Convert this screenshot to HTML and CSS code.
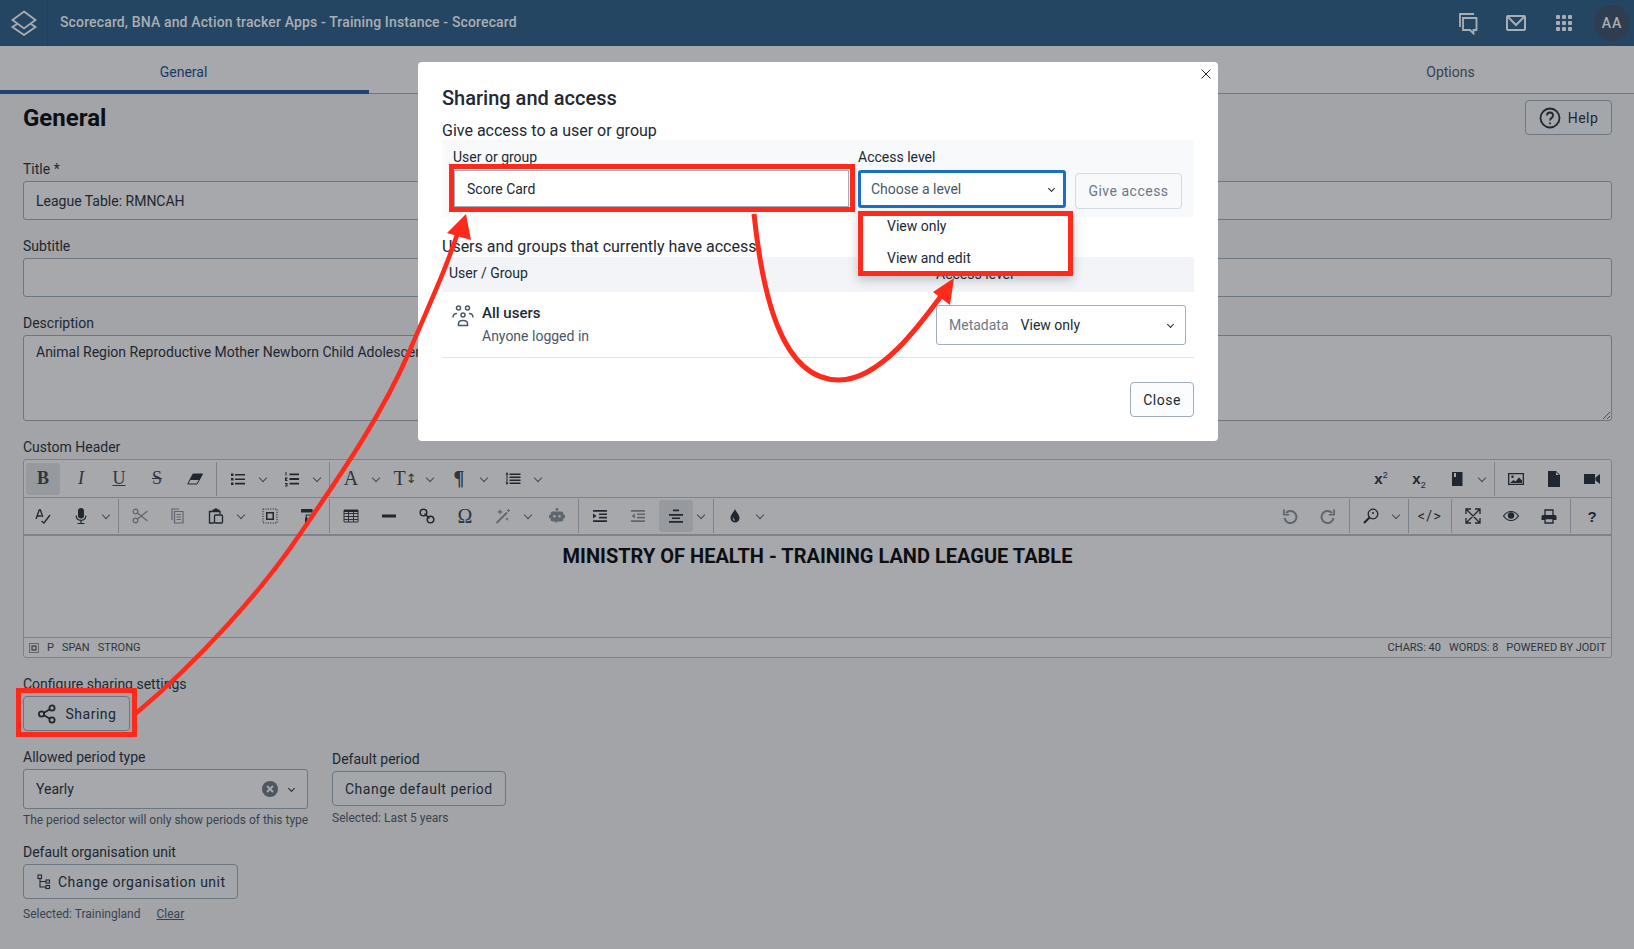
FILE: index.html
```html
<!DOCTYPE html>
<html lang="en">
<head>
    <meta charset="UTF-8">
    <title>Scorecard - General</title>
    <link rel="stylesheet" href="styles.css">
</head>
<body>

    <!-- icon set for the editor toolbar -->
    <svg class="defs" width="0" height="0">
        <symbol id="i-eraser" viewBox="0 0 16 16"><path d="M6 3h9.500L10 13H.8z" fill="none" stroke="currentColor"/><path d="M6 3h9.500l-3 6H2.800z"/></symbol>
        <symbol id="i-ul" viewBox="0 0 16 16"><path d="M1 2.500h2.500V5H1zM1 7h2.500v2.500H1zM1 11.500h2.500V14H1zM5 3h10v1.600H5zM5 7.400h10V9H5zM5 11.800h10v1.600H5z"/></symbol>
        <symbol id="i-ol" viewBox="0 0 16 16"><path d="M1.500 1h1v3.500h-1zM1 6.500h2.500v1L2 9h1.500v1H1zM1 12h2.500v3.500H1v-1h1.500v-.4H1.500v-.7h1V13H1zM5.500 2.500H15v1.800H5.500zM5.500 7.100H15v1.800H5.500zM5.500 11.700H15v1.800H5.500z"/></symbol>
        <symbol id="i-spacing" viewBox="0 0 16 16"><path d="M4.500 2.500h11v1.400h-11zM4.500 5.500h11v1.400h-11zM4.500 8.500h11v1.400h-11zM4.500 11.500h11v1.400h-11zM.5 3.500L2 1l1.500 2.500h-1v8h1L2 14 .5 11.500h1v-8z"/></symbol>
        <symbol id="i-spell" viewBox="0 0 16 16"><path d="M1 11L4.200 2h1.200l2.400 7M2.200 8h4.200M6.500 13l2.500 2 6-8" fill="none" stroke="currentColor" stroke-width="1.300"/></symbol>
        <symbol id="i-mic" viewBox="0 0 16 16"><rect x="5" y="0" width="6" height="10.500" rx="3"/><path d="M3.200 7.500c0 3 2 4.800 4.800 4.800s4.800-1.800 4.800-4.800M8 12v3M4.500 15.500h7" fill="none" stroke="currentColor" stroke-width="1.200"/></symbol>
        <symbol id="i-cut" viewBox="0 0 16 16"><g fill="none" stroke="currentColor" stroke-width="1.300"><circle cx="3.500" cy="3.500" r="2.300"/><circle cx="3.500" cy="12.500" r="2.300"/><path d="M5.500 5l10 8M5.500 11l10-8"/></g></symbol>
        <symbol id="i-copy" viewBox="0 0 16 16"><g fill="none" stroke="currentColor" stroke-width="1.200"><path d="M2 12V1h7"/><path d="M4.500 3.500h8.500V15H4.500zM6.500 6.500h4.500M6.500 9h4.500M6.500 11.500h4.500"/></g></symbol>
        <symbol id="i-paste" viewBox="0 0 16 16"><path d="M5.500 1.500L8 0l2 1.500h1.500v2h-7v-2z"/><g fill="none" stroke="currentColor" stroke-width="1.300"><path d="M6 15H1.500V3.500H12V6"/><rect x="6.500" y="7" width="8" height="8" rx="1"/></g></symbol>
        <symbol id="i-select" viewBox="0 0 16 16"><path d="M1 1h14v14H1z" fill="none" stroke="currentColor" stroke-width=".9" stroke-dasharray="1.200 1.200"/><path d="M4 4h8v8H4zM5.500 5.500v5h5v-5z" fill-rule="evenodd"/></symbol>
        <symbol id="i-paint" viewBox="0 0 16 16"><path d="M1 1h11.500v3.500H1zM5 9.500h2.500V16H5z"/><path d="M12.500 3H15v4H6.200v3" fill="none" stroke="currentColor" stroke-width="1.100"/></symbol>
        <symbol id="i-table" viewBox="0 0 16 16"><g fill="none" stroke="currentColor" stroke-width=".9"><path d="M1 2h14v12H1zM1 5.500h14M1 8.500h14M1 11.500h14M5.500 2v12M10.500 2v12"/></g><path d="M1 2h14v2H1z"/></symbol>
        <symbol id="i-hr" viewBox="0 0 16 16"><path d="M1 6.500h14v3H1z"/></symbol>
        <symbol id="i-link" viewBox="0 0 16 16"><g fill="none" stroke="currentColor" stroke-width="1.500"><circle cx="4.500" cy="4.500" r="3.300"/><circle cx="11.500" cy="11.500" r="3.300"/><path d="M5.500 5.500l5 5"/></g></symbol>
        <symbol id="i-wand" viewBox="0 0 16 16"><path d="M1.500 15L12 4.500" stroke="currentColor" stroke-width="1.800"/><path d="M5 1l.8 2L8 4l-2.200.8L5 7l-.8-2.200L2 4l2.200-1zM12 9l.6 1.500L14 11l-1.400.6L12 13l-.6-1.400L10 11l1.400-.5zM13 1h1v1h1v1h-1v1h-1V3h-1V2h1z"/></symbol>
        <symbol id="i-robot" viewBox="0 0 16 16"><path d="M7.300 0h1.400v2.500H7.300z"/><circle cx="8" cy="1.300" r="1.300"/><path d="M4 3.500h8a2.500 2.500 0 0 1 2.500 2.500v1H16v3h-1.500v1a2.500 2.500 0 0 1-2.500 2.500H9L6.500 15v-1.500H4A2.500 2.500 0 0 1 1.500 11v-1H0V7h1.500V6A2.500 2.500 0 0 1 4 3.500zM5.500 7a1.300 1.300 0 1 0 0 2.600 1.300 1.300 0 0 0 0-2.600zm5 0a1.300 1.300 0 1 0 0 2.600 1.300 1.300 0 0 0 0-2.600z" fill-rule="evenodd"/></symbol>
        <symbol id="i-indent" viewBox="0 0 16 16"><path d="M1 2h14v1.800H1zM7 5.500h8v1.600H7zM7 8.800h8v1.600H7zM1 12.200h14V14H1zM1 5.500L4.500 8 1 10.500z"/></symbol>
        <symbol id="i-outdent" viewBox="0 0 16 16"><path d="M1 2h14v1.800H1zM7 5.500h8v1.600H7zM7 8.800h8v1.600H7zM1 12.200h14V14H1zM5 5.500L1.500 8 5 10.500z"/></symbol>
        <symbol id="i-center" viewBox="0 0 16 16"><path d="M5 1.500h6v1.800H5zM1 6h14v1.800H1zM4 9.500h8v1.600H4zM1 13h14v1.800H1z"/></symbol>
        <symbol id="i-drop" viewBox="0 0 16 16"><path d="M8 1c1 3 4.500 5.500 4.500 9a4.500 4.500 0 0 1-9 0C3.500 6.500 7 4 8 1zM6 9.500a2 2 0 0 0 2 3v-1a1 1 0 0 1-1-2z" fill-rule="evenodd"/></symbol>
        <symbol id="i-undo" viewBox="0 0 16 16"><path d="M4 5a6 6 0 1 1-1.500 5" fill="none" stroke="currentColor" stroke-width="2"/><path d="M1 1.500h1.800v4.500h4.500L7 7.500H1z"/></symbol>
        <symbol id="i-redo" viewBox="0 0 16 16"><path d="M12 5a6 6 0 1 0 1.500 5" fill="none" stroke="currentColor" stroke-width="2"/><path d="M15 1.500h-1.800v4.500H8.700L9 7.500h6z"/></symbol>
        <symbol id="i-search" viewBox="0 0 16 16"><circle cx="10" cy="6" r="4.800" fill="none" stroke="currentColor" stroke-width="1.300"/><path d="M6.500 9.500L1 15" stroke="currentColor" stroke-width="2.200"/><circle cx="10" cy="5" r="1"/></symbol>
        <symbol id="i-expand" viewBox="0 0 16 16"><path d="M1 6V1h5M1 1l14 14M10 15h5v-5M10 1h5v5M15 1L1 15M1 10v5h5" fill="none" stroke="currentColor" stroke-width="1.300"/></symbol>
        <symbol id="i-eye" viewBox="0 0 16 16"><path d="M.5 8c2-3 4.500-4.500 7.500-4.500s5.500 1.500 7.500 4.500c-2 3-4.500 4.500-7.500 4.500S2.500 11 .5 8z" fill="none" stroke="currentColor" stroke-width="1.200"/><circle cx="8" cy="7.500" r="3.200"/></symbol>
        <symbol id="i-print" viewBox="0 0 16 16"><path d="M4 7V2h8v5" fill="none" stroke="currentColor" stroke-width="1.300"/><path d="M2 7h12a1.500 1.500 0 0 1 1.500 1.500V12H12v-1.500H4V12H.5V8.500A1.500 1.500 0 0 1 2 7z"/><path d="M4 10.500h8V15H4z" fill="none" stroke="currentColor" stroke-width="1.300"/></symbol>
        <symbol id="i-book" viewBox="0 0 16 16"><path d="M3 1h10.500v14H3zM5 2v4h2V2z" fill-rule="evenodd"/></symbol>
        <symbol id="i-image" viewBox="0 0 16 16"><path d="M0 2h16v12H0zM1.300 3.300v9.400h13.400V3.300z" fill-rule="evenodd"/><circle cx="4.500" cy="5.800" r="1.300"/><path d="M2 12l3.500-3 2 1.500L11 6.500l3 3V12z"/></symbol>
        <symbol id="i-file" viewBox="0 0 16 16"><path d="M2 0h8l4 4v12H2zM10 1v3h3z" fill-rule="evenodd"/></symbol>
        <symbol id="i-video" viewBox="0 0 16 16"><path d="M0 3h11v10H0zM11.500 6.500L16 3v10l-4.500-3.500z"/></symbol>
    </svg>

    <header class="topbar">
        <div class="logo">
            <svg width="28" height="26" viewBox="0 0 28 26" fill="none" stroke="#a9aeb4" stroke-width="1.800">
                <path d="M14 1.500L25.500 10 14 18.500 2.500 10z"/>
                <path d="M7 14L2.500 17 14 25 25.500 17 21 14"/>
            </svg>
        </div>
        <div class="app-title">Scorecard, BNA and Action tracker Apps - Training Instance - Scorecard</div>
        <div class="top-icons">
            <svg width="24" height="24" viewBox="0 0 24 24" fill="none" stroke="#a9aeb4" stroke-width="1.800">
                <path d="M5 16V3h14"/>
                <path d="M8 7h13.500v12h-3v3.500L15 19H8z"/>
            </svg>
            <svg width="22" height="22" viewBox="0 0 22 22" fill="none" stroke="#a9aeb4" stroke-width="2">
                <rect x="2" y="4" width="18" height="14" rx="1"/>
                <path d="M3 5l8 8 8-8"/>
            </svg>
            <svg width="18" height="18" viewBox="0 0 18 18" fill="#a9aeb4">
                <rect x="1" y="1" width="4" height="4" rx="1"/><rect x="7" y="1" width="4" height="4" rx="1"/><rect x="13" y="1" width="4" height="4" rx="1"/>
                <rect x="1" y="7" width="4" height="4" rx="1"/><rect x="7" y="7" width="4" height="4" rx="1"/><rect x="13" y="7" width="4" height="4" rx="1"/>
                <rect x="1" y="13" width="4" height="4" rx="1"/><rect x="7" y="13" width="4" height="4" rx="1"/><rect x="13" y="13" width="4" height="4" rx="1"/>
            </svg>
            <div class="avatar">AA</div>
        </div>
    </header>

    <nav class="tabs">
        <div class="tab active">General</div>
        <div class="tab">Options</div>
    </nav>

    <main class="page">
        <div class="title-row">
            <h1>General</h1>
            <button class="btn help-btn" type="button">
                <svg width="22" height="22" viewBox="0 0 22 22" fill="none" stroke="#212934" stroke-width="1.800">
                    <circle cx="11" cy="11" r="9.500"/>
                    <path d="M8 8.500c0-4 6-4 6 0 0 2.500-3 2.500-3 5"/>
                    <path d="M11 15.500v1.800"/>
                </svg>
                Help
            </button>
        </div>

        <div class="field">
            <label>Title *</label>
            <input class="text-input" type="text" value="League Table: RMNCAH">
        </div>
        <div class="field">
            <label>Subtitle</label>
            <input class="text-input" type="text">
        </div>
        <div class="field">
            <label>Description</label>
            <textarea class="text-area">Animal Region Reproductive Mother Newborn Child Adolescent Health</textarea>
        </div>

        <div class="field">
            <label>Custom Header</label>
            <div class="editor">
                <div class="tool-row">
                    <span class="tool serif active-tool"><b>B</b></span>
                    <span class="tool serif"><i>I</i></span>
                    <span class="tool serif"><u>U</u></span>
                    <span class="tool serif"><s>S</s></span>
                    <span class="tool"><svg><use href="#i-eraser"/></svg></span>
                    <span class="sep"></span>
                    <span class="tool"><svg><use href="#i-ul"/></svg></span><span class="chev"></span>
                    <span class="tool"><svg><use href="#i-ol"/></svg></span><span class="chev"></span>
                    <span class="sep"></span>
                    <span class="tool serif big">A</span><span class="chev"></span>
                    <span class="tool serif big">T<small>↕</small></span><span class="chev"></span>
                    <span class="tool serif big"><b>¶</b></span><span class="chev"></span>
                    <span class="tool"><svg><use href="#i-spacing"/></svg></span><span class="chev"></span>
                    <span class="spacer"></span>
                    <span class="tool script"><b>x<sup>2</sup></b></span>
                    <span class="tool script"><b>x<sub>2</sub></b></span>
                    <span class="tool"><svg><use href="#i-book"/></svg></span><span class="chev"></span>
                    <span class="sep"></span>
                    <span class="tool"><svg><use href="#i-image"/></svg></span>
                    <span class="tool"><svg><use href="#i-file"/></svg></span>
                    <span class="tool"><svg><use href="#i-video"/></svg></span>
                </div>
                <div class="tool-row">
                    <span class="tool"><svg><use href="#i-spell"/></svg></span>
                    <span class="tool"><svg><use href="#i-mic"/></svg></span><span class="chev"></span>
                    <span class="sep"></span>
                    <span class="tool off"><svg><use href="#i-cut"/></svg></span>
                    <span class="tool off"><svg><use href="#i-copy"/></svg></span>
                    <span class="tool"><svg><use href="#i-paste"/></svg></span><span class="chev"></span>
                    <span class="tool"><svg><use href="#i-select"/></svg></span>
                    <span class="tool"><svg><use href="#i-paint"/></svg></span>
                    <span class="sep"></span>
                    <span class="tool"><svg><use href="#i-table"/></svg></span>
                    <span class="tool"><svg><use href="#i-hr"/></svg></span>
                    <span class="tool"><svg><use href="#i-link"/></svg></span>
                    <span class="tool serif big">Ω</span>
                    <span class="tool off"><svg><use href="#i-wand"/></svg></span><span class="chev"></span>
                    <span class="tool off"><svg><use href="#i-robot"/></svg></span>
                    <span class="sep"></span>
                    <span class="tool"><svg><use href="#i-indent"/></svg></span>
                    <span class="tool off"><svg><use href="#i-outdent"/></svg></span>
                    <span class="tool active-tool"><svg><use href="#i-center"/></svg></span><span class="chev"></span>
                    <span class="sep"></span>
                    <span class="tool"><svg><use href="#i-drop"/></svg></span><span class="chev"></span>
                    <span class="spacer"></span>
                    <span class="tool off"><svg><use href="#i-undo"/></svg></span>
                    <span class="tool off"><svg><use href="#i-redo"/></svg></span>
                    <span class="sep"></span>
                    <span class="tool"><svg><use href="#i-search"/></svg></span><span class="chev"></span>
                    <span class="sep"></span>
                    <span class="tool code">&lt;/&gt;</span>
                    <span class="sep"></span>
                    <span class="tool"><svg><use href="#i-expand"/></svg></span>
                    <span class="tool"><svg><use href="#i-eye"/></svg></span>
                    <span class="tool"><svg><use href="#i-print"/></svg></span>
                    <span class="sep"></span>
                    <span class="tool script"><b>?</b></span>
                </div>
                <div class="editor-body">MINISTRY OF HEALTH - TRAINING LAND LEAGUE TABLE</div>
                <div class="statusbar">
                    <span class="crumbs">
                        <svg width="10" height="10" viewBox="0 0 10 10" fill="none" stroke="#212934" stroke-dasharray="1 1"><rect x=".5" y=".5" width="9" height="9"/><rect x="3" y="3" width="4" height="4" stroke-dasharray="none"/></svg>
                        <span>P</span><span>SPAN</span><span>STRONG</span>
                    </span>
                    <span class="counts"><span>CHARS: 40</span><span>WORDS: 8</span><span>POWERED BY JODIT</span></span>
                </div>
            </div>
        </div>

        <div class="field sharing-field">
            <label>Configure sharing settings</label>
            <button class="btn sharing-btn" type="button">
                <svg width="20" height="20" viewBox="0 0 20 20" fill="none" stroke="#212934" stroke-width="1.800">
                    <circle cx="15" cy="4" r="2.600"/><circle cx="4.500" cy="10" r="2.600"/><circle cx="15" cy="16" r="2.600"/>
                    <path d="M7 8.700l5.500-3.300M7 11.300l5.500 3.300"/>
                </svg>
                Sharing
            </button>
        </div>

        <div class="period-row">
            <div class="period-type">
                <label>Allowed period type</label>
                <div class="select-box">
                    <span>Yearly</span>
                    <svg class="clear-x" width="16" height="16" viewBox="0 0 16 16"><circle cx="8" cy="8" r="8" fill="#6c7787"/><path d="M5 5l6 6M11 5l-6 6" stroke="#fff" stroke-width="1.800"/></svg>
                    <span class="chev dark"></span>
                </div>
                <p class="hint">The period selector will only show periods of this type</p>
            </div>
            <div class="default-period">
                <label>Default period</label>
                <button class="btn" type="button">Change default period</button>
                <p class="hint">Selected: Last 5 years</p>
            </div>
        </div>

        <div class="field org-field">
            <label>Default organisation unit</label>
            <button class="btn org-btn" type="button">
                <svg width="14" height="16" viewBox="0 0 14 16" fill="none" stroke="#212934" stroke-width="1.100">
                    <rect x="1" y="1" width="3.500" height="3.500"/><rect x="9" y="6" width="3.500" height="3"/><rect x="9" y="11.500" width="3.500" height="3"/>
                    <path d="M3 4.500V13h6M3 7.500h6"/>
                </svg>
                Change organisation unit
            </button>
            <p class="hint org-hint"><span>Selected: Trainingland</span><u>Clear</u></p>
        </div>

        <div class="field cut-field">
            <label>Additional labels</label>
        </div>
    </main>

    <div class="backdrop"></div>

    <section class="modal">
        <svg class="modal-close" width="10" height="10" viewBox="0 0 10 10" stroke="#212934" stroke-width="1"><path d="M.5.500l9 9M9.500.500l-9 9"/></svg>
        <h2>Sharing and access</h2>
        <h3>Give access to a user or group</h3>
        <div class="access-form">
            <div class="who-col">
                <label>User or group</label>
                <input class="who-input" type="text" value="Score Card">
            </div>
            <div class="level-col">
                <label>Access level</label>
                <div class="level-select">
                    <span>Choose a level</span>
                    <span class="chev dark"></span>
                </div>
                <div class="level-menu">
                    <div>View only</div>
                    <div>View and edit</div>
                </div>
            </div>
            <button class="btn give-btn" type="button">Give access</button>
        </div>

        <h3 class="current-title">Users and groups that currently have access</h3>
        <div class="table-head">
            <span>User / Group</span>
            <span class="level-head">Access level</span>
        </div>
        <div class="table-row">
            <svg class="users-icon" width="22" height="22" viewBox="0 0 22 22" fill="none" stroke="#4a5768" stroke-width="1.500">
                <circle cx="6.500" cy="3" r="2"/><circle cx="15.500" cy="3" r="2"/><circle cx="11" cy="10" r="2"/>
                <path d="M1 12.500c0-2.500 1.500-4 4-4M21 12.500c0-2.500-1.500-4-4-4"/>
                <path d="M6.500 20.500v-2c0-2 2-3 4.500-3s4.500 1 4.500 3v2z"/>
            </svg>
            <div class="who">
                <strong>All users</strong>
                <span>Anyone logged in</span>
            </div>
            <div class="row-select">
                <span class="muted">Metadata</span>
                <span>View only</span>
                <span class="chev dark"></span>
            </div>
        </div>
        <div class="modal-actions">
            <button class="btn close-btn" type="button">Close</button>
        </div>
    </section>

    <!-- red annotation boxes and arrows -->
    <svg class="arrows" width="1634" height="949" viewBox="0 0 1634 949">
        <rect x="18.500" y="690.500" width="116" height="44" fill="none" stroke="#ff2a1c" stroke-width="5"/>
        <rect x="451.500" y="166.500" width="401" height="43" fill="none" stroke="#ff2a1c" stroke-width="5"/>
        <path d="M134 715C200 660 262 590 298 537S380 420 410 350S447 265 458 232" fill="none" stroke="#ff2a1c" stroke-width="4.500"/>
        <path d="M466 214L447 233L471 240Z" fill="#ff2a1c"/>
        <path d="M754 214C762 290 780 380 839 380C880 380 920 325 944 292" fill="none" stroke="#ff2a1c" stroke-width="5"/>
        <path d="M954 278L933 292L950 305Z" fill="#ff2a1c"/>
    </svg>

</body>
</html>
```

FILE: styles.css
```css
html, body {
    margin: 0;
    height: 949px;
    overflow: hidden;
}

body {
    position: relative;
    background: #f8f9fa;
    color: #212934;
    font-family: Roboto, "Noto Sans", sans-serif;
    font-size: 14px;
}

.defs {
    position: absolute;
}

/* top bar */
.topbar {
    position: relative;
    z-index: 2;
    display: flex;
    align-items: center;
    height: 46px;
    background: #254662;
    color: #a9aeb4;
}

.logo {
    display: flex;
    align-items: center;
    justify-content: center;
    width: 47px;
    height: 46px;
    border-right: 1px solid #22405a;
}

.app-title {
    margin-left: 12px;
    padding-bottom: 2px;
    font-size: 14px;
    font-weight: 500;
    letter-spacing: .14px;
}

.top-icons {
    display: flex;
    align-items: center;
    margin-left: auto;
    margin-right: 4px;
}

.top-icons svg:nth-child(1) { margin-right: 26px; }
.top-icons svg:nth-child(2) { margin-right: 28px; }
.top-icons svg:nth-child(3) { margin-right: 21px; }

.avatar {
    display: flex;
    align-items: center;
    justify-content: center;
    width: 36px;
    height: 36px;
    border-radius: 50%;
    background: #2e3d50;
    font-size: 14px;
    font-weight: 500;
    letter-spacing: 1px;
}

/* tabs */
.tabs {
    display: flex;
    justify-content: space-between;
    height: 48px;
    box-sizing: border-box;
    border-bottom: 1px solid #a0adba;
    background: #fff;
}

.tab {
    width: 369px;
    height: 48px;
    box-sizing: border-box;
    padding-top: 18px;
    padding-left: 2px;
    text-align: center;
    color: #4a5768;
}

.tab.active {
    padding-left: 0;
    padding-right: 2px;
    border-bottom: 4px solid #1e56a8;
    color: #14478f;
}

/* page form */
.page {
    padding: 0 22px 0 23px;
}

.title-row {
    display: flex;
    justify-content: space-between;
    align-items: center;
    height: 35px;
    padding-top: 6px;
    margin-bottom: 26px;
}

h1 {
    margin: 1px 0 0;
    font-size: 24px;
    font-weight: 700;
    color: #000;
}

label {
    display: block;
    line-height: 16px;
    margin-bottom: 4px;
}

.field {
    margin-bottom: 18px;
}

.text-input, .text-area {
    display: block;
    width: 100%;
    box-sizing: border-box;
    padding: 0 12px;
    border: 1px solid #a0adba;
    border-radius: 3px;
    background: #fff;
    color: #212934;
    font-family: Roboto, sans-serif;
    font-size: 14px;
}

.text-input {
    height: 39px;
}

.text-area {
    height: 86px;
    padding-top: 8px;
}

.btn {
    display: inline-flex;
    align-items: center;
    justify-content: center;
    box-sizing: border-box;
    height: 35px;
    padding: 0 12px;
    border: 1px solid #a0adba;
    border-radius: 4px;
    background: #fbfcfd;
    color: #212934;
    font-family: Roboto, sans-serif;
    font-size: 14px;
    letter-spacing: .5px;
}

.help-btn {
    gap: 7px;
    width: 87px;
    padding: 0;
}

/* editor */
.editor {
    height: 199px;
    box-sizing: border-box;
    display: flex;
    flex-direction: column;
    border: 1px solid #b9c2cc;
    border-radius: 3px;
    background: #fff;
}

.tool-row {
    display: flex;
    align-items: center;
    height: 38px;
    box-sizing: border-box;
    border-bottom: 1px solid #b9c2cc;
    color: #212934;
}

.tool-row + .tool-row {
    height: 38px;
    border-bottom-width: 2px;
}

.tool {
    display: flex;
    align-items: center;
    justify-content: center;
    flex: none;
    width: 34px;
    height: 32px;
    margin: 0 2px;
    border-radius: 3px;
    font-size: 18px;
}

.tool svg {
    width: 16px;
    height: 16px;
    fill: currentColor;
}

.tool.off {
    color: #8a929c;
}

.active-tool {
    background: #e4e6e9;
}

.serif {
    font-family: "Liberation Serif", serif;
    color: #3a414b;
}

.serif.big {
    font-size: 20px;
}

.serif small {
    font-size: 13px;
    font-family: "DejaVu Sans", sans-serif;
}

.script {
    font-family: "Liberation Sans", sans-serif;
    font-size: 15px;
    line-height: 1;
}

.script sup, .script sub {
    font-size: 9px;
    line-height: 0;
    font-weight: 400;
}

.code {
    font-size: 14px;
    letter-spacing: 1.500px;
}

.chev {
    position: relative;
    flex: none;
    display: block;
    width: 16px;
    height: 32px;
}

.chev::after {
    content: "";
    position: absolute;
    left: 3px;
    top: 12px;
    width: 5px;
    height: 5px;
    border-right: 1.200px solid #5a626d;
    border-bottom: 1.200px solid #5a626d;
    transform: rotate(45deg);
}

.chev.dark::after {
    top: 13px;
    width: 4px;
    height: 4px;
    border-color: #212934;
}

.sep {
    flex: none;
    width: 1px;
    height: 34px;
    margin: 0 2px;
    background: #b9c2cc;
}

.spacer {
    flex: 1;
}

.editor-body {
    flex: 1;
    padding-top: 7px;
    text-align: center;
    font-size: 20px;
    font-weight: 700;
    line-height: 26px;
    color: #000;
}

.statusbar {
    display: flex;
    justify-content: space-between;
    align-items: center;
    height: 19px;
    padding: 0 5px;
    border-top: 1px solid #b9c2cc;
    font-size: 11px;
    color: #3a414b;
}

.crumbs, .counts {
    display: flex;
    align-items: center;
    gap: 8px;
}

/* lower form */
.sharing-field {
    margin-bottom: 18px;
}

.sharing-btn {
    gap: 9px;
    width: 107px;
    padding: 0;
}

.period-row {
    display: flex;
    gap: 24px;
    align-items: flex-start;
}

.period-type {
    width: 285px;
}

.default-period {
    padding-top: 2px;
}

.default-period .hint {
    margin-top: 5px;
}

.select-box {
    display: flex;
    align-items: center;
    height: 40px;
    box-sizing: border-box;
    padding: 0 9px 0 12px;
    border: 1px solid #a0adba;
    border-radius: 3px;
    background: #fff;
}

.select-box span:first-child {
    flex: 1;
}

.clear-x {
    margin-right: 8px;
}

.select-box .chev {
    width: 12px;
}

.hint {
    margin: 4px 0 0;
    font-size: 12px;
    line-height: 15px;
    color: #4a5768;
    white-space: nowrap;
}

.org-field {
    margin-top: 16px;
    margin-bottom: 0;
}

.org-btn {
    gap: 7px;
    padding: 0 11px 0 13px;
}

.org-hint {
    display: flex;
    gap: 16px;
    margin-top: 8px;
}

.cut-field {
    margin-top: 26px;
}

/* dark layer behind the modal */
.backdrop {
    position: absolute;
    left: 0;
    right: 0;
    top: 46px;
    bottom: 0;
    background: rgba(33, 37, 44, .4);
}

/* sharing modal */
.modal {
    position: absolute;
    left: 418px;
    top: 62px;
    width: 800px;
    height: 379px;
    box-sizing: border-box;
    padding: 24px;
    border-radius: 4px;
    background: #fff;
}

.modal-close {
    position: absolute;
    right: 7px;
    top: 7px;
}

.modal h2 {
    margin: 0 0 13px;
    font-size: 20px;
    font-weight: 500;
    line-height: 24px;
}

.modal h3 {
    margin: 0 0 1px;
    font-size: 16px;
    font-weight: 400;
    line-height: 16px;
}

.access-form {
    display: flex;
    gap: 9px;
    height: 77px;
    box-sizing: border-box;
    padding: 9px 12px 9px;
    border-radius: 4px;
    background: #f8f9fa;
}

.access-form label {
    margin-bottom: 5px;
    margin-left: -1px;
}

.who-col {
    width: 395px;
}

.who-input {
    display: block;
    width: 100%;
    height: 37px;
    box-sizing: border-box;
    padding: 0 12px;
    border: 1px solid #a0adba;
    border-radius: 0;
    color: #212934;
    font-family: Roboto, sans-serif;
    font-size: 14px;
}

.level-col {
    position: relative;
    width: 208px;
}

.access-form .level-col label {
    margin-left: 0;
}

.level-select {
    display: flex;
    justify-content: space-between;
    align-items: center;
    height: 38px;
    box-sizing: border-box;
    padding: 0 1px 0 10px;
    border: 3px solid #1a6ecb;
    border-radius: 3px;
    background: #fff;
    color: #4a5768;
}

.level-menu {
    position: absolute;
    left: 0;
    top: 62px;
    width: 215px;
    height: 65px;
    box-sizing: border-box;
    padding-left: 24px;
    border: 5px solid #ff2a1c;
    background: #fff;
    box-shadow: 0 4px 10px rgba(33, 41, 52, .25);
    line-height: 32px;
}

.level-menu div:first-child {
    margin-top: -6px;
}

.give-btn {
    align-self: flex-end;
    width: 107px;
    height: 36px;
    margin-bottom: -1px;
    padding: 0;
    border-color: #d5dae0;
    background: #f8f9fa;
    color: #6c7787;
}

.current-title {
    margin-top: 22px !important;
    margin-bottom: 2px !important;
}

.table-head {
    display: flex;
    justify-content: space-between;
    height: 35px;
    box-sizing: border-box;
    padding: 8px 0 0 7px;
    background: #f3f4f7;
    line-height: 16px;
}

.level-head {
    width: 258px;
    padding-top: 1px;
}

.table-row {
    display: flex;
    align-items: center;
    height: 66px;
    box-sizing: border-box;
    padding: 0 8px 0 10px;
    border-bottom: 1px solid #e2e6ea;
}

.users-icon {
    align-self: flex-start;
    margin-top: 13px;
    margin-right: 8px;
}

.who {
    flex: 1;
    display: flex;
    flex-direction: column;
    gap: 3px;
    line-height: 20px;
}

.who strong {
    font-size: 15px;
    font-weight: 500;
}

.who span {
    color: #4a5768;
}

.row-select {
    display: flex;
    align-items: center;
    gap: 12px;
    width: 250px;
    height: 40px;
    box-sizing: border-box;
    padding: 0 6px 0 12px;
    border: 1px solid #a0adba;
    border-radius: 3px;
}

.row-select .muted {
    color: #6c7787;
}

.row-select .chev {
    margin-left: auto;
    width: 14px;
}

.modal-actions {
    display: flex;
    justify-content: flex-end;
    margin-top: 24px;
}

.close-btn {
    width: 64px;
    padding: 0;
}

/* annotation layer */
.arrows {
    position: absolute;
    z-index: 3;
    left: 0;
    top: 0;
    pointer-events: none;
}
```
